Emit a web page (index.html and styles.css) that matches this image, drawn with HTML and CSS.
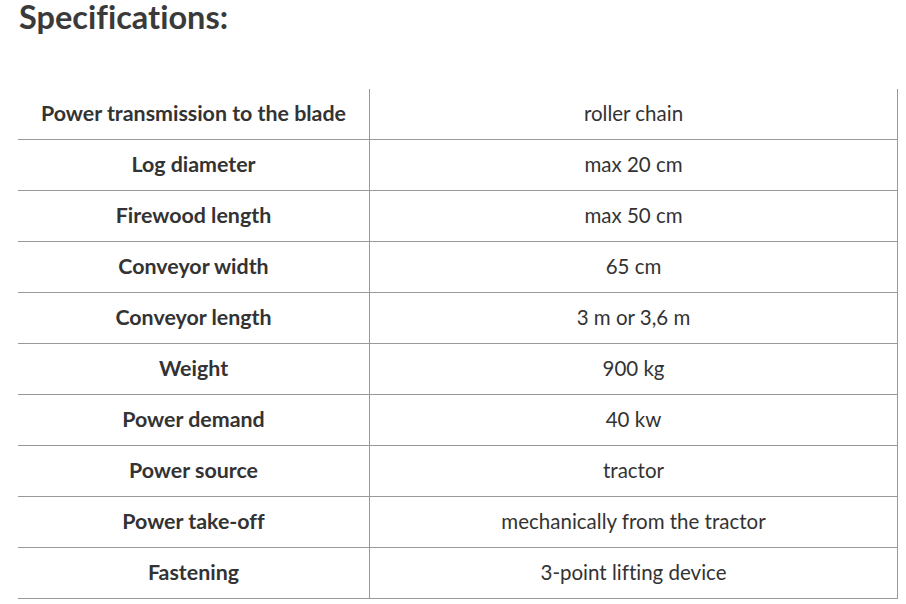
FILE: index.html
```html
<!DOCTYPE html>
<html>
<head>
<meta charset="utf-8">
<link rel="stylesheet" href="styles.css">
</head>
<body>
<div class="page">
  <h2 class="title">Specifications:</h2>
  <table class="specs">
    <tr><th>Power transmission to the blade</th><td>roller chain</td></tr>
    <tr><th>Log diameter</th><td>max 20 cm</td></tr>
    <tr><th>Firewood length</th><td>max 50 cm</td></tr>
    <tr><th>Conveyor width</th><td>65 cm</td></tr>
    <tr><th>Conveyor length</th><td>3 m or 3,6 m</td></tr>
    <tr><th>Weight</th><td>900 kg</td></tr>
    <tr><th>Power demand</th><td>40 kw</td></tr>
    <tr><th>Power source</th><td>tractor</td></tr>
    <tr><th>Power take-off</th><td>mechanically from the tractor</td></tr>
    <tr><th>Fastening</th><td>3-point lifting device</td></tr>
  </table>
</div>
</body>
</html>
```

FILE: styles.css
```css
html, body {
  margin: 0;
  padding: 0;
  background: #fff;
}
.page {
  padding: 0 0 0 18px;
  font-family: Lato, "Open Sans", sans-serif;
  font-variant-ligatures: none;
  color: #333;
}
.title {
  margin: 0;
  padding: 0 0 0 1px;
  font-size: 32.5px;
  line-height: 34px;
  font-weight: 700;
  color: #3a3a3a;
  height: 89px;
}
.specs {
  border-collapse: collapse;
  width: 880px;
  table-layout: fixed;
}
.specs th, .specs td {
  height: 48px;
  padding: 0 0 2px 0;
  text-align: center;
  vertical-align: middle;
  border-bottom: 1px solid #999;
  border-right: 1px solid #999;
  color: #333;
}
.specs th {
  width: 351px;
  font-size: 21.4px;
  font-weight: 700;
}
.specs td {
  font-size: 20.5px;
  font-weight: 400;
}
```
